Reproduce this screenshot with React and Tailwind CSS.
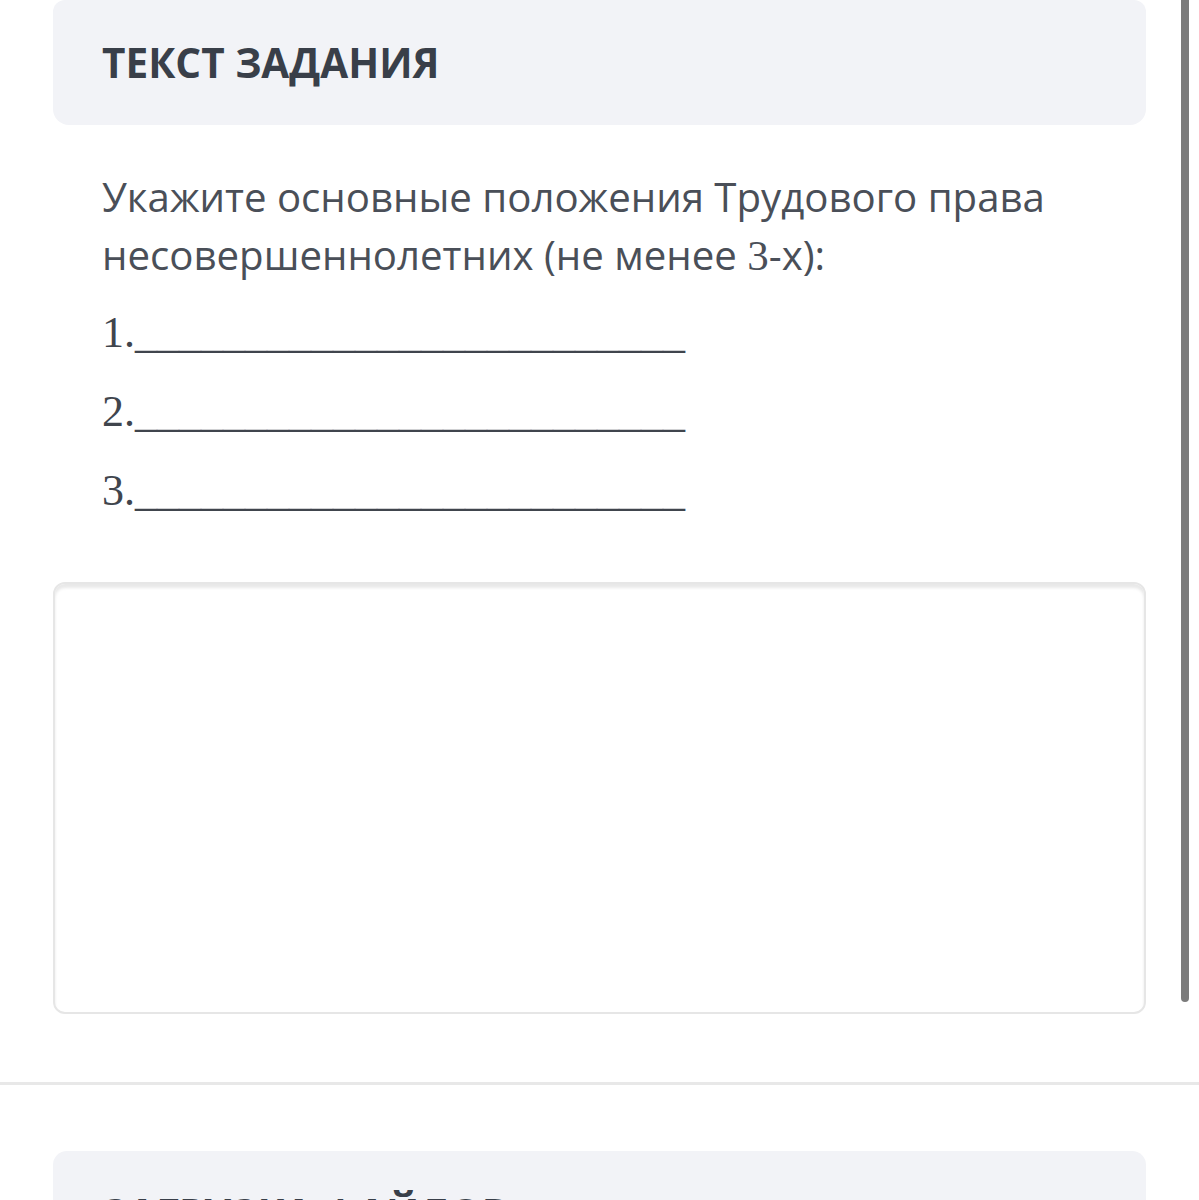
const answers = ["1.", "2.", "3."];

export default function App() {
  return (
    <div className="relative min-h-[1200px] w-[1199px] overflow-hidden bg-white font-['Open_Sans',sans-serif]">
      <div className="absolute right-[10px] top-0 h-[1002px] w-[8px] rounded-b-full bg-[#7b7b7b]" />

      <div className="px-[53px]">
        <div className="flex h-[125px] items-center rounded-b-[16px] rounded-t-[12px] bg-[#f2f3f7] px-[49px] pt-[2px]">
          <h2 className="text-[40.5px] font-bold text-[#393f49]">
            ТЕКСТ ЗАДАНИЯ
          </h2>
        </div>

        <div className="px-[49px] pt-[43px] text-[#4a4f58]">
          <p className="text-[40.2px] leading-[58px]">
            Укажите основные положения Трудового права несовершеннолетних (не
            менее <span className="font-['Liberation_Serif',serif] text-[43px]">3</span>-х):
          </p>
          <div className="mt-[19px] flex flex-col gap-[21px]">
            {answers.map((a) => (
              <div
                key={a}
                className="font-['Liberation_Serif',serif] text-[44px] leading-[58px] text-[#40454d]"
              >
                {a}
                {"_________________________"}
              </div>
            ))}
          </div>
        </div>

        <div className="mt-[62px] h-[432px] rounded-[12px] border-2 border-[#e6e6e6] bg-white shadow-[inset_0_4px_3px_rgba(0,0,0,0.09)]" />
      </div>

      <div className="mt-[68px] h-[3px] w-full bg-[#e8e8e8]" />

      <div className="px-[53px] pt-[66px]">
        <div className="h-[120px] rounded-[14px] bg-[#f2f3f7] px-[49px] pt-[33px]">
          <h2 className="text-[40.5px] font-bold text-[#393f49]">
            ЗАГРУЗКА ФАЙЛОВ
          </h2>
        </div>
      </div>
    </div>
  );
}
